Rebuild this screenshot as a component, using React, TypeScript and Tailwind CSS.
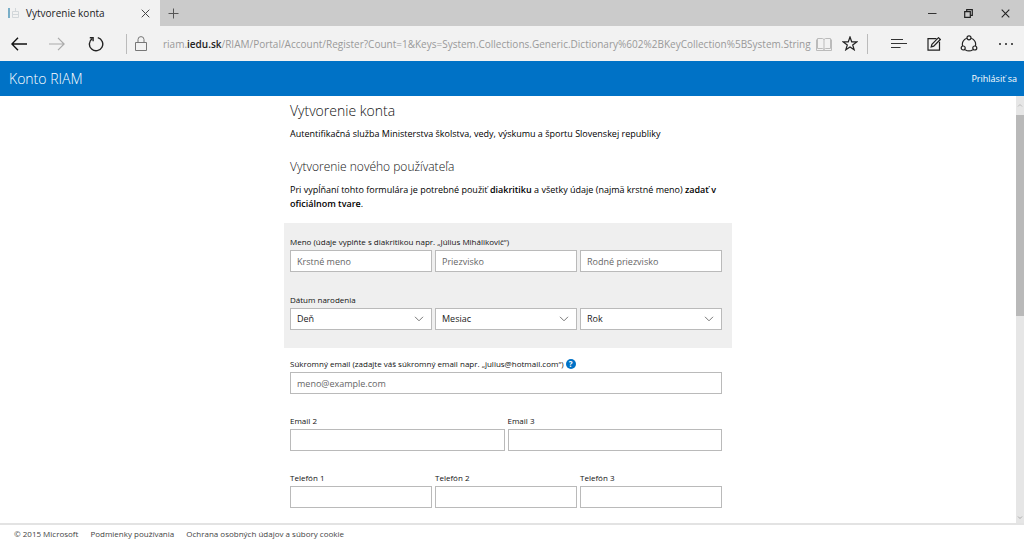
import type { ReactNode } from "react";

const inputClass =
  "block h-[22px] w-full min-w-0 rounded-none border border-[#bababa] bg-white px-1.5 text-[9px] text-[#222] outline-none placeholder:text-[#666] placeholder:opacity-100 focus:border-[#0072c6]";
const labelClass = "block h-4 text-[8px] leading-4 whitespace-nowrap text-[#111]";

function TextField({ id, label }: { id: string; label: string }) {
  return (
    <div className="min-w-0 flex-1">
      <label htmlFor={id} className={labelClass}>
        {label}
      </label>
      <input id={id} type="text" className={inputClass} />
    </div>
  );
}

function DateSelect({ name }: { name: string }) {
  return (
    <div className="relative min-w-0 flex-1">
      <select aria-label={name} defaultValue="" className={`${inputClass} appearance-none`}>
        <option value="">{name}</option>
      </select>
      <svg
        className="pointer-events-none absolute top-2 right-2 h-1.5 w-2.5"
        viewBox="0 0 10 6"
        fill="none"
        stroke="#777"
        aria-hidden="true"
      >
        <path d="M1 .8 5 4.8 9 .8" />
      </svg>
    </div>
  );
}

function IconButton({ label, className, children }: { label: string; className: string; children: ReactNode }) {
  return (
    <button type="button" aria-label={label} className={`flex h-full shrink-0 items-center justify-center ${className}`}>
      {children}
    </button>
  );
}

function TabStrip() {
  return (
    <div className="flex h-[26px] shrink-0 bg-[#cbcbcb]">
      <div className="flex w-40 items-center bg-[#f2f2f2] pl-2">
        <svg width="12" height="12" viewBox="0 0 12 12" fill="none" aria-hidden="true">
          <path d="M1 1v10" stroke="#5b9dbd" strokeWidth="1.6" />
          <path d="M4.5 4.5h6v6h-6zM7.5 1v3.500M4.500 7.500h6" stroke="#d2d7da" />
        </svg>
        <span className="ml-1.5 flex-1 text-[10px] whitespace-nowrap text-[#222]">Vytvorenie konta</span>
        <IconButton label="Zavrieť kartu" className="w-[30px]">
          <svg width="9" height="9" viewBox="0 0 9 9" stroke="#444" aria-hidden="true">
            <path d="m.7.7 7.600 7.600M8.300.7.7 8.300" />
          </svg>
        </IconButton>
      </div>
      <IconButton label="Nová karta" className="w-[27px]">
        <svg width="11" height="11" viewBox="0 0 11 11" stroke="#555" aria-hidden="true">
          <path d="M5.500.5v10M.5 5.500h10" />
        </svg>
      </IconButton>
      <div className="ml-auto flex">
        <IconButton label="Minimalizovať" className="w-9">
          <svg width="9" height="9" viewBox="0 0 9 9" stroke="#333" aria-hidden="true">
            <path d="M0 4.500h8.500" />
          </svg>
        </IconButton>
        <IconButton label="Obnoviť" className="w-9">
          <svg width="9" height="9" viewBox="0 0 9 9" fill="none" stroke="#222" strokeWidth="1.2" aria-hidden="true">
            <path d="M.7 2.700h5.600v5.600H.7zM2.700 2.700v-2h5.600v5.600h-2" />
          </svg>
        </IconButton>
        <IconButton label="Zavrieť" className="w-[38px]">
          <svg width="9" height="9" viewBox="0 0 9 9" stroke="#222" strokeWidth="1.1" aria-hidden="true">
            <path d="m.7.7 7.600 7.600M8.300.7.7 8.300" />
          </svg>
        </IconButton>
      </div>
    </div>
  );
}

function Toolbar() {
  return (
    <div className="flex h-[35px] shrink-0 items-center bg-[#f2f2f2]">
      <IconButton label="Späť" className="w-[38px]">
        <svg width="16" height="14" viewBox="0 0 16 14" fill="none" stroke="#111" strokeWidth="1.4" aria-hidden="true">
          <path d="M16 7H1M7 .8.9 7 7 13.200" />
        </svg>
      </IconButton>
      <IconButton label="Dopredu" className="w-[38px]">
        <svg width="16" height="14" viewBox="0 0 16 14" fill="none" stroke="#aaa" strokeWidth="1.2" aria-hidden="true">
          <path d="M0 7h15M9 .8 15.100 7 9 13.200" />
        </svg>
      </IconButton>
      <IconButton label="Obnoviť stránku" className="w-10">
        <svg width="16" height="16" viewBox="0 0 16 16" fill="none" stroke="#222" strokeWidth="1.4" aria-hidden="true">
          <path d="M9.800 1.600A6.700 6.700 0 1 1 4.200 2.600" />
          <path d="M1.800 1.700h3.300v3.500" />
        </svg>
      </IconButton>
      <div className="ml-2.5 h-5 w-px shrink-0 bg-[#bbb]" />
      <svg className="ml-2 shrink-0" width="12" height="15" viewBox="0 0 12 15" fill="none" stroke="#777" aria-hidden="true">
        <path d="M.5 6.500h11v8H.5zM3 6.500V3.600a3 3 0 0 1 6 0v2.900" />
      </svg>
      <p className="ml-4 min-w-0 flex-1 overflow-hidden text-[10px] leading-4 whitespace-nowrap text-[#999]">
        riam.<span className="font-semibold text-[#222]">iedu.sk</span>
        /RIAM/Portal/Account/Register?Count=1&amp;Keys=System.Collections.Generic.Dictionary%602%2BKeyCollection%5BSystem.String
      </p>
      <IconButton label="Zobrazenie na čítanie" className="w-6">
        <svg width="16" height="14" viewBox="0 0 16 14" fill="none" stroke="#bbb" aria-hidden="true">
          <path d="M8 2.500v10M1.500 1.500h5L8 2.500l1.500-1h5v10h-5l-1.500 1-1.500-1h-5zM.5 2.500v11h15v-11" />
        </svg>
      </IconButton>
      <IconButton label="Pridať k obľúbeným" className="w-7">
        <svg width="16" height="15" viewBox="0 0 16 15" fill="none" stroke="#222" strokeWidth="1.2" aria-hidden="true">
          <path d="m8 1 1.700 4.800 5 .1-4 3 1.500 4.900L8 11l-4.200 2.800 1.500-4.900-4-3 5-.1z" />
        </svg>
      </IconButton>
      <div className="ml-[3px] h-5 w-px shrink-0 bg-[#bbb]" />
      <IconButton label="Centrum" className="ml-3 w-[37px]">
        <svg width="17" height="11" viewBox="0 0 17 11" stroke="#333" strokeWidth="1.2" aria-hidden="true">
          <path d="M1 1.500h12M1 5.500h16M1 9.500h9.500" />
        </svg>
      </IconButton>
      <IconButton label="Webová poznámka" className="w-[34px]">
        <svg width="14" height="14" viewBox="0 0 14 14" fill="none" stroke="#222" strokeWidth="1.2" aria-hidden="true">
          <path d="M9.500 1.600H1v11.500h11.500V4.800" />
          <path d="m4.200 9.900.7-2.600L11.500.7l1.800 1.800-6.600 6.600z" />
        </svg>
      </IconButton>
      <IconButton label="Zdieľať" className="w-9">
        <svg width="18" height="17" viewBox="0 0 18 17" fill="none" stroke="#222" strokeWidth="1.200" aria-hidden="true">
          <path d="M6.800 3.300a6.300 6.300 0 0 0-4.200 7.700M11.200 3.300a6.300 6.300 0 0 1 4.200 7.700M5.200 14.700a6.800 6.800 0 0 0 7.600 0" />
          <circle cx="9" cy="2.800" r="2" />
          <circle cx="3.200" cy="13" r="2" />
          <circle cx="14.800" cy="13" r="2" />
        </svg>
      </IconButton>
      <IconButton label="Viac" className="w-[37px]">
        <svg width="16" height="4" viewBox="0 0 16 4" fill="#222" aria-hidden="true">
          <circle cx="2" cy="2" r="1" />
          <circle cx="8" cy="2" r="1" />
          <circle cx="14" cy="2" r="1" />
        </svg>
      </IconButton>
    </div>
  );
}

function RegistrationForm() {
  return (
    <form className="mx-auto w-full max-w-[448px]">
      <div className="px-1.5">
        <h1 className="pt-1 text-[14px] leading-5 font-light text-[#111]">Vytvorenie konta</h1>
        <p className="mt-1.5 text-[9px] leading-[14px] text-black">
          Autentifikačná služba Ministerstva školstva, vedy, výskumu a športu Slovenskej republiky
        </p>
        <h2 className="mt-4 text-[12px] leading-5 font-light text-[#111]">Vytvorenie nového používateľa</h2>
        <p className="mt-1.5 text-[9px] leading-[14px] text-black">
          Pri vypĺňaní tohto formulára je potrebné použiť <strong className="font-semibold">diakritiku</strong> a všetky
          údaje (najmä krstné meno) <strong className="font-semibold">zadať v oficiálnom tvare</strong>.
        </p>
      </div>

      <div className="mt-3 bg-[#efefef] pt-[11px] pr-2.5 pb-[18px] pl-1.5">
        <label htmlFor="first-name" className={labelClass}>
          Meno (údaje vyplňte s diakritikou napr. „Július Mihálikovič“)
        </label>
        <div className="flex gap-[3px]">
          <input id="first-name" className={inputClass} placeholder="Krstné meno" />
          <input aria-label="Priezvisko" className={inputClass} placeholder="Priezvisko" />
          <input aria-label="Rodné priezvisko" className={inputClass} placeholder="Rodné priezvisko" />
        </div>
        <fieldset className="mt-5">
          <legend className={labelClass}>Dátum narodenia</legend>
          <div className="flex gap-[3px]">
            <DateSelect name="Deň" />
            <DateSelect name="Mesiac" />
            <DateSelect name="Rok" />
          </div>
        </fieldset>
      </div>

      <div className="flex flex-col gap-[19px] pt-2 pr-2.5 pb-4 pl-1.5">
        <div>
          <div className="flex items-center gap-0.5">
            <label htmlFor="email" className={labelClass}>
              Súkromný email (zadajte váš súkromný email napr. „julius@hotmail.com“)
            </label>
            <button
              type="button"
              aria-label="Pomocník"
              className="flex size-2.5 items-center justify-center rounded-full bg-[#0072c6] text-[8px] leading-none font-bold text-white"
            >
              ?
            </button>
          </div>
          <input id="email" type="email" className={inputClass} placeholder="meno@example.com" />
        </div>
        <div className="flex gap-[3px]">
          <TextField id="email-2" label="Email 2" />
          <TextField id="email-3" label="Email 3" />
        </div>
        <div className="flex gap-[3px]">
          <TextField id="phone-1" label="Telefón 1" />
          <TextField id="phone-2" label="Telefón 2" />
          <TextField id="phone-3" label="Telefón 3" />
        </div>
      </div>
    </form>
  );
}

function ScrollBar() {
  return (
    <div className="flex w-2 shrink-0 flex-col items-center bg-[#e6e6e6]" aria-hidden="true">
      <svg className="my-1.5 shrink-0" width="6" height="7" viewBox="0 0 6 7" fill="none" stroke="#bbb">
        <path d="M1 4.500 3 2.500l2 2" />
      </svg>
      <div className="h-[47%] w-full bg-[#b9b9b9]" />
      <svg className="mt-auto mb-0.5 shrink-0" width="6" height="7" viewBox="0 0 6 7" fill="none" stroke="#aaa">
        <path d="m1 2.500 2 2 2-2" />
      </svg>
    </div>
  );
}

export default function App() {
  return (
    <div className="flex h-screen flex-col overflow-hidden bg-white font-['Open_Sans','Noto_Sans',sans-serif]">
      <TabStrip />
      <Toolbar />
      <header className="flex h-[35px] shrink-0 items-center justify-between bg-[#0072c6] pr-[7px] pl-[9px] text-white">
        <a href="#home" className="text-[14px] font-light">
          Konto RIAM
        </a>
        <a href="#login" className="text-[9px]">
          Prihlásiť sa
        </a>
      </header>
      <div className="flex min-h-0 flex-1">
        <main className="min-w-0 flex-1 overflow-hidden pt-px">
          <RegistrationForm />
        </main>
        <ScrollBar />
      </div>
      <footer className="flex h-[21px] shrink-0 items-center gap-3 border-t-2 border-[#e3e3e3] px-3.5 pb-0.5 text-[8px] whitespace-nowrap text-[#444]">
        <span>© 2015 Microsoft</span>
        <a href="#terms">Podmienky používania</a>
        <a href="#privacy">Ochrana osobných údajov a súbory cookie</a>
      </footer>
    </div>
  );
}
